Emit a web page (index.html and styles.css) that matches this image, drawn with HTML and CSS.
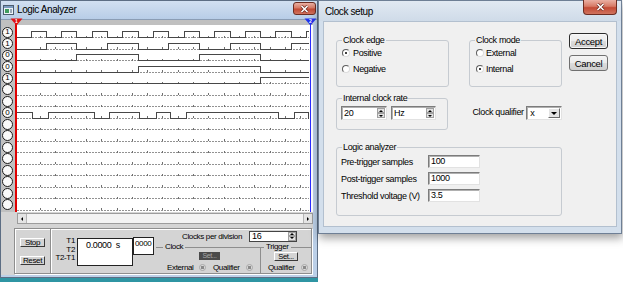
FILE: index.html
```html
<!DOCTYPE html>
<html>
<head>
<meta charset="utf-8">
<title>Logic Analyzer</title>
<link rel="stylesheet" href="styles.css">
</head>
<body>
<div class="la-col">
  <div class="la-win">
    <div class="la-title">
      <svg class="app-icon" width="11" height="10" viewBox="0 0 11 10">
        <rect x="0.5" y="0.5" width="10" height="9" fill="#eef3f8" stroke="#4d5d70"/>
        <rect x="1" y="1" width="9" height="2" fill="#7d9cc0"/>
        <rect x="2" y="4" width="4" height="4" fill="#3f9c5e"/>
        <rect x="7" y="4" width="2" height="4" fill="#9aa9b8"/>
      </svg>
      <span class="title-text">Logic Analyzer</span>
      <div class="close-btn la-close">
        <svg width="9" height="8" viewBox="0 0 9 8"><path d="M1.5 1 L7.5 7 M7.5 1 L1.5 7" stroke="#6b2a20" stroke-width="3"/><path d="M1.5 1 L7.5 7 M7.5 1 L1.5 7" stroke="#fff" stroke-width="1.6"/></svg>
      </div>
    </div>
    <div class="la-client">
      <div class="la-top">
        <div class="leds">
          <div class="led"><span>1</span></div>
          <div class="led"><span>1</span></div>
          <div class="led"><span>0</span></div>
          <div class="led"><span>0</span></div>
          <div class="led"><span>1</span></div>
          <div class="led"><span></span></div>
          <div class="led"><span></span></div>
          <div class="led"><span>0</span></div>
          <div class="led"><span></span></div>
          <div class="led"><span></span></div>
          <div class="led"><span></span></div>
          <div class="led"><span></span></div>
          <div class="led"><span></span></div>
          <div class="led"><span></span></div>
          <div class="led"><span></span></div>
          <div class="led"><span></span></div>
        </div>
        <svg class="scope" width="298" height="192" viewBox="0 0 298 192">
          <rect x="2" y="5" width="296" height="187" fill="#fff"/>
          <g class="grid">
            <line x1="2" x2="294" y1="17.5" y2="17.5"/>
            <line x1="2" x2="294" y1="29" y2="29"/>
            <line x1="2" x2="294" y1="40.5" y2="40.5"/>
            <line x1="2" x2="294" y1="52" y2="52"/>
            <line x1="2" x2="294" y1="63.5" y2="63.5"/>
            <line x1="2" x2="294" y1="75" y2="75"/>
            <line x1="2" x2="294" y1="86.5" y2="86.5"/>
            <line x1="2" x2="294" y1="98" y2="98"/>
            <line x1="2" x2="294" y1="109.5" y2="109.5"/>
            <line x1="2" x2="294" y1="121" y2="121"/>
            <line x1="2" x2="294" y1="132.5" y2="132.5"/>
            <line x1="2" x2="294" y1="144" y2="144"/>
            <line x1="2" x2="294" y1="155.5" y2="155.5"/>
            <line x1="2" x2="294" y1="167" y2="167"/>
            <line x1="2" x2="294" y1="178.5" y2="178.5"/>
            <line x1="2" x2="294" y1="190" y2="190"/>
          </g>
          <g class="ticks">
            <line x1="25" x2="294" y1="16.5" y2="16.5"/>
            <line x1="25" x2="294" y1="28" y2="28"/>
            <line x1="25" x2="294" y1="39.5" y2="39.5"/>
            <line x1="25" x2="294" y1="51" y2="51"/>
            <line x1="25" x2="294" y1="62.5" y2="62.5"/>
            <line x1="25" x2="294" y1="74" y2="74"/>
            <line x1="25" x2="294" y1="85.5" y2="85.5"/>
            <line x1="25" x2="294" y1="97" y2="97"/>
            <line x1="25" x2="294" y1="108.5" y2="108.5"/>
            <line x1="25" x2="294" y1="120" y2="120"/>
            <line x1="25" x2="294" y1="131.5" y2="131.5"/>
            <line x1="25" x2="294" y1="143" y2="143"/>
            <line x1="25" x2="294" y1="154.5" y2="154.5"/>
            <line x1="25" x2="294" y1="166" y2="166"/>
            <line x1="25" x2="294" y1="177.5" y2="177.5"/>
            <line x1="25" x2="294" y1="189" y2="189"/>
          </g>
          <polyline class="sig" points="2,17.5 16.5,17.5 16.5,11.5 31.5,11.5 31.5,17.5 46.5,17.5 46.5,11.5 61.5,11.5 61.5,17.5 77.5,17.5 77.5,11.5 92.5,11.5 92.5,17.5 107.5,17.5 107.5,11.5 123.5,11.5 123.5,17.5 138.5,17.5 138.5,11.5 153.5,11.5 153.5,17.5 169.5,17.5 169.5,11.5 184.5,11.5 184.5,17.5 199.5,17.5 199.5,11.5 215.5,11.5 215.5,17.5 230.5,17.5 230.5,11.5 245.5,11.5 245.5,17.5 260.5,17.5 260.5,11.5 276.5,11.5 276.5,17.5 291.5,17.5 291.5,11.5 294,11.5"/>
          <polyline class="sig" points="2,29 31.5,29 31.5,23 61.5,23 61.5,29 92.5,29 92.5,23 123.5,23 123.5,29 153.5,29 153.5,23 184.5,23 184.5,29 215.5,29 215.5,23 245.5,23 245.5,29 276.5,29 276.5,23 294,23"/>
          <polyline class="sig" points="2,40.5 61.5,40.5 61.5,34.5 123.5,34.5 123.5,40.5 184.5,40.5 184.5,34.5 245.5,34.5 245.5,40.5 294,40.5"/>
          <polyline class="sig" points="2,52 123.5,52 123.5,46 245.5,46 245.5,52 294,52"/>
          <polyline class="sig" points="2,63.5 245.5,63.5 245.5,57.5 294,57.5"/>
          <polyline class="sig" points="2,92 17.5,92 17.5,98 33.5,98 33.5,92 79.5,92 79.5,98 94.5,98 94.5,92 124.5,92 124.5,98 141.5,98 141.5,92 155.5,92 155.5,98 171.5,98 171.5,92 263.5,92 263.5,98 279.5,98 279.5,92 293.5,92 293.5,98 294,98"/>
          <rect x="0" y="0" width="2" height="192" fill="#e00000"/>
          <rect x="295" y="5" width="1" height="187" fill="#2a2aff"/>
          <polygon points="-4.5,-1.5 7.5,-1.5 1.5,5.5" fill="#e01010"/>
          <text class="mk" x="1.5" y="3.2">1</text>
          <polygon points="289.5,-1.5 301.5,-1.5 295.5,5.5" fill="#2233ee"/>
          <text class="mk" x="295.5" y="3.2">2</text>
        </svg>
      </div>
      <div class="hscroll">
        <div class="sb-btn sb-left"><i class="tri-l"></i></div>
        <div class="sb-btn sb-right"><i class="tri-r"></i></div>
      </div>
      <div class="panel">
        <div class="pb">
          <div class="cbtn">Stop</div>
          <div class="cbtn">Reset</div>
        </div>
        <div class="times">
          <div class="tlabels"><span>T1</span><span>T2</span><span>T2-T1</span></div>
          <div class="tbox">0.0000&nbsp;&nbsp;s</div>
          <div class="tbox2">0000</div>
        </div>
        <div class="clocks">
          <div class="cpd">
            <span class="cpd-label">Clocks per division</span>
            <div class="cpd-in"><span>16</span><i class="spin-s"><b><i class="tu"></i></b><b><i class="td"></i></b></i></div>
          </div>
          <div class="frames">
            <fieldset class="fr fr-clock">
              <legend>Clock</legend>
              <div class="set-dis">Set...</div>
              <div class="frow"><span class="fl-ext">External</span><i class="ledo"></i><span class="fl-q">Qualifier</span><i class="ledo"></i></div>
            </fieldset>
            <fieldset class="fr fr-trig">
              <legend>Trigger</legend>
              <div class="cbtn set-btn">Set...</div>
              <div class="frow frow-t"><span class="fl-q2">Qualifier</span><i class="ledo"></i></div>
            </fieldset>
          </div>
        </div>
      </div>
    </div>
  </div>
  <div class="teal"></div>
</div>

<div class="dlg">
  <div class="dlg-title">
    <span class="dlg-title-text">Clock setup</span>
    <div class="close-btn dlg-close">
      <svg width="9" height="8" viewBox="0 0 9 8"><path d="M1.5 1 L7.5 7 M7.5 1 L1.5 7" stroke="#6b2a20" stroke-width="3"/><path d="M1.5 1 L7.5 7 M7.5 1 L1.5 7" stroke="#fff" stroke-width="1.6"/></svg>
    </div>
  </div>
  <div class="dlg-client">
    <div class="dlg-main">
      <div class="drow1">
        <fieldset class="grp g-edge">
          <legend>Clock edge</legend>
          <div class="radio"><i class="rb on"></i><span>Positive</span></div>
          <div class="radio"><i class="rb"></i><span>Negative</span></div>
        </fieldset>
        <fieldset class="grp g-mode">
          <legend>Clock mode</legend>
          <div class="radio"><i class="rb"></i><span>External</span></div>
          <div class="radio"><i class="rb on"></i><span>Internal</span></div>
        </fieldset>
      </div>
      <div class="drow2">
        <fieldset class="grp g-rate">
          <legend>Internal clock rate</legend>
          <div class="rate-row">
            <div class="spinbox w46"><span>20</span><i class="sp"><b><i class="tu"></i></b><b><i class="td"></i></b></i></div>
            <div class="spinbox w45"><span>Hz</span><i class="sp"><b><i class="tu"></i></b><b><i class="td"></i></b></i></div>
          </div>
        </fieldset>
        <span class="cq">Clock qualifier</span>
        <div class="combo"><span>x</span><i class="dd"><i class="td2"></i></i></div>
      </div>
      <fieldset class="grp g-logic">
        <legend>Logic analyzer</legend>
        <div class="lgrid">
          <span>Pre-trigger samples</span><div class="tb">100</div>
          <span>Post-trigger samples</span><div class="tb">1000</div>
          <span>Threshold voltage (V)</span><div class="tb">3.5</div>
        </div>
      </fieldset>
    </div>
    <div class="dlg-btns">
      <div class="wbtn def">Accept</div>
      <div class="wbtn">Cancel</div>
    </div>
  </div>
</div>
</body>
</html>
```

FILE: styles.css
```css
* { box-sizing: border-box; }

body {
  margin: 0;
  width: 623px;
  height: 282px;
  overflow: hidden;
  background: #fff;
  display: flex;
  align-items: flex-start;
  font-family: "Liberation Sans", Arial, sans-serif;
  color: #000;
}

/* ---------- Logic analyzer window ---------- */
.la-col { width: 318px; display: flex; flex-direction: column; }

.la-win {
  height: 278px;
  border: 1px solid #5d6e84;
  background: #bcd0e8;
  padding: 0 4px 2px 0;
  display: flex;
  flex-direction: column;
}

.la-title {
  height: 19px;
  margin-right: -4px;
  display: flex;
  align-items: center;
  background: linear-gradient(#d2e0f1, #b8cde7);
  border-bottom: 1px solid #8b9db4;
}
.app-icon { margin-left: 2px; flex: none; }
.title-text { margin-left: 3px; font-size: 10px; letter-spacing: -0.4px; line-height: 12px; }

.close-btn {
  margin-left: auto;
  display: flex;
  align-items: center;
  justify-content: center;
  background: linear-gradient(#eab0a3, #d77a66 45%, #c34a35 55%, #d0735e);
  border: 1px solid #6d2d22;
  border-top: none;
  border-radius: 0 0 4px 4px;
}
.la-close { width: 23px; height: 13px; margin-right: 1px; align-self: flex-start; margin-top: 1px; border-top: 1px solid #6d2d22; border-radius: 3px; }

.la-client {
  flex: 1;
  background: #d4d4d4;
  display: flex;
  flex-direction: column;
}

.la-top { display: flex; height: 192px; background: #c0c0c0; }

.leds { width: 14px; padding: 6.75px 0 0 1px; flex: none; }
.led { height: 11.5px; }
.led span {
  display: flex;
  align-items: center;
  justify-content: center;
  width: 11px;
  height: 11px;
  border: 1px solid #1c1c1c;
  border-radius: 50%;
  background: #fafafa;
  font-size: 8px;
  line-height: 1;
}

.scope { display: block; overflow: visible; flex: none; }
.grid line { stroke: #929292; stroke-width: 1; stroke-dasharray: 2 1; shape-rendering: crispEdges; }
.ticks line { stroke: #707070; stroke-width: 2; stroke-dasharray: 1 14.3; shape-rendering: crispEdges; }
.sig { fill: none; stroke: #474747; stroke-width: 1; shape-rendering: crispEdges; }
.mk { font-family: "Liberation Sans", Arial, sans-serif; font-size: 5px; font-weight: bold; fill: #fff; text-anchor: middle; }

.hscroll {
  margin: 1px 0 0 16px;
  width: 296px;
  height: 11px;
  border: 1px solid #9c9c9c;
  background: #f3f3f3;
  display: flex;
  justify-content: space-between;
}
.sb-btn {
  width: 9px;
  height: 9px;
  background: #e4e4e4;
  display: flex;
  align-items: center;
  justify-content: center;
}
.sb-left { border-right: 1px solid #b5b5b5; }
.sb-right { border-left: 1px solid #b5b5b5; }
.tri-l { display: block; border-style: solid; border-width: 2px 2px 2px 0; border-color: transparent #000 transparent transparent; }
.tri-r { display: block; border-style: solid; border-width: 2px 0 2px 2px; border-color: transparent transparent transparent #000; }

.panel {
  margin: 4px 0 0 13px;
  width: 298px;
  height: 46px;
  border: 1px solid #8e8e8e;
  box-shadow: inset 1px 1px 0 #fff, 1px 1px 0 #fff;
  display: flex;
  font-size: 8px;
  letter-spacing: -0.35px;
}

.pb { width: 35px; padding: 9px 0 0 5px; display: flex; flex-direction: column; gap: 9px; flex: none; }

.cbtn {
  width: 25px;
  height: 9px;
  font-size: 8px;
  line-height: 7px;
  display: flex;
  align-items: center;
  justify-content: center;
  background: #d4d4d4;
  border: 1px solid;
  border-color: #fff #3a3a3a #3a3a3a #fff;
}

.times {
  width: 106px;
  flex: none;
  border-left: 1px solid #8e8e8e;
  box-shadow: inset 1px 0 0 #fff;
  display: flex;
  align-items: flex-start;
}
.tlabels {
  width: 23px;
  margin-left: 1px;
  padding-top: 8px;
  display: flex;
  flex-direction: column;
  align-items: flex-end;
  font-size: 8px;
  line-height: 8.5px;
}
.tbox {
  margin: 9px 0 0 2px;
  width: 56px;
  height: 28px;
  background: #fff;
  border: 1px solid #222;
  font-size: 9px;
  line-height: 10px;
  padding: 1px 0 0 8px;
  white-space: nowrap;
}
.tbox2 {
  margin-top: 8px;
  width: 21px;
  height: 18px;
  background: #fff;
  border: 1px solid #222;
  font-size: 8px;
  line-height: 9px;
  padding: 1px 0 0 1px;
}

.clocks { width: 155px; flex: none; display: flex; flex-direction: column; }
.cpd { height: 14px; display: flex; align-items: center; }
.cpd-label { margin-left: 26px; width: 67px; white-space: nowrap; }
.cpd-in {
  width: 48px;
  height: 11px;
  background: #fff;
  border: 1px solid #444;
  display: flex;
  justify-content: space-between;
  align-items: stretch;
  font-size: 9px;
  line-height: 9px;
  padding-left: 2px;
}
.spin-s, .sp { display: flex; flex-direction: column; width: 8px; }
.spin-s b, .sp b {
  flex: 1;
  display: flex;
  align-items: center;
  justify-content: center;
  background: #e2e2e2;
  border: 1px solid #a0a0a0;
}
.tu { display: block; border-style: solid; border-width: 0 2px 2px 2px; border-color: transparent transparent #000 transparent; }
.td { display: block; border-style: solid; border-width: 2px 2px 0 2px; border-color: #000 transparent transparent transparent; }

.frames { display: flex; height: 30px; }
.fr {
  margin: 0;
  padding: 0;
  border: none;
  border-top: 1px solid #8e8e8e;
  min-width: 0;
  height: 30px;
}
.fr legend { font-size: 8px; line-height: 8px; padding: 0 2px; }
.fr-clock { width: 104px; }
.fr-clock legend { margin-left: 7px; }
.fr-trig { width: 51px; border-left: 1px solid #8e8e8e; }
.fr-trig legend { margin-left: 3px; }

.set-dis {
  margin: 1px 0 0 43px;
  width: 21px;
  height: 8px;
  background: #4a4a4a;
  color: #a6a6a6;
  font-size: 7px;
  line-height: 8px;
  text-align: center;
}
.set-btn { margin: 1px 0 0 13px; width: 24px; height: 9px; font-size: 7.5px; }

.frow { display: flex; align-items: center; height: 12px; margin-top: 1px; white-space: nowrap; }
.frow-t { margin-top: 0; }
.fl-ext { margin-left: 11px; width: 32px; }
.fl-q { margin-left: 7px; width: 33px; }
.fl-q2 { margin-left: 7px; width: 33px; }
.ledo {
  display: block;
  width: 7px;
  height: 7px;
  border-radius: 50%;
  border: 1px solid #a8a8a8;
  background: radial-gradient(circle, #8a8a8a 0 1.4px, #dadada 2px);
}

.teal { height: 4px; background: #2f95a3; }

/* ---------- Clock setup dialog ---------- */
.dlg {
  width: 304px;
  height: 234px;
  border: 1px solid #6e7f95;
  background: #d3dfec;
  padding: 0 4px 6px 4px;
  display: flex;
  flex-direction: column;
  box-shadow: 1px 4px 9px rgba(0, 0, 0, 0.38);
  font-size: 9px;
  letter-spacing: -0.35px;
}
.dlg-title {
  height: 20px;
  margin: 0 -4px;
  background: linear-gradient(#e1e9f2, #cfdbe8);
  display: flex;
  align-items: flex-start;
  flex: none;
}
.dlg-title-text { padding-left: 6px; font-size: 10px; letter-spacing: -0.4px; line-height: 21px; }
.dlg-close { width: 34px; height: 15px; margin-right: 4px; margin-top: -1px; }

.dlg-client {
  flex: 1;
  background: #f0f0f0;
  border: 1px solid #b3c0cf;
  padding: 11px 0 0 12px;
  display: flex;
  align-items: flex-start;
}
.dlg-main { width: 226px; display: flex; flex-direction: column; flex: none; }

.drow1 { display: flex; gap: 20px; margin-top: 2px; }

.grp {
  margin: 0;
  padding: 0;
  border: 1px solid #c6cbd1;
  border-radius: 3px;
  min-width: 0;
}
.grp legend { margin-left: 5px; padding: 0 1px; font-size: 9px; line-height: 10px; }
.g-edge { width: 113px; height: 52px; }
.g-mode { width: 93px; height: 52px; }

.radio { display: flex; align-items: center; gap: 3px; height: 16px; margin-left: 5px; }
.g-mode .radio { margin-left: 6px; gap: 2px; }
.rb {
  display: flex;
  align-items: center;
  justify-content: center;
  width: 8px;
  height: 8px;
  border-radius: 50%;
  background: #fff;
  border: 1px solid;
  border-color: #5e5e5e #dcdcdc #dcdcdc #5e5e5e;
}
.rb.on::after { content: ""; width: 2px; height: 2px; border-radius: 50%; background: #000; }

.drow2 { display: flex; align-items: flex-start; margin-top: 6px; }
.g-rate { width: 113px; height: 37px; }
.rate-row { display: flex; gap: 4px; margin: 3px 0 0 4px; }
.spinbox, .combo, .tb {
  background: #fff;
  border: 1px solid;
  border-color: #7c7c7c #e2e2e2 #e2e2e2 #7c7c7c;
  box-shadow: inset 1px 1px 0 #b0b0b0;
}
.spinbox {
  height: 14px;
  display: flex;
  justify-content: space-between;
  line-height: 12px;
  padding: 0 0 0 2px;
}
.spinbox .sp { margin: 1px; width: 8px; }
.w46 { width: 46px; }
.w45 { width: 45px; }

.cq { margin: 14px 0 0 24px; width: 54px; line-height: 10px; white-space: nowrap; }
.combo {
  margin-top: 13px;
  width: 36px;
  height: 14px;
  display: flex;
  justify-content: space-between;
  line-height: 12px;
  padding-left: 3px;
}
.dd {
  display: flex;
  align-items: center;
  justify-content: center;
  width: 12px;
  margin: 1px;
  background: #e4e4e4;
  border: 1px solid;
  border-color: #fff #6a6a6a #6a6a6a #fff;
}
.td2 { display: block; border-style: solid; border-width: 3px 3px 0 3px; border-color: #000 transparent transparent transparent; }

.g-logic { margin-top: 12px; width: 226px; height: 74px; }
.lgrid {
  display: grid;
  grid-template-columns: 87px 52px;
  grid-auto-rows: 13px;
  row-gap: 4.2px;
  align-items: center;
  margin: 3px 0 0 4px;
  white-space: nowrap;
}
.tb { height: 13px; padding-left: 2px; line-height: 11px; }

.dlg-btns { margin-left: 7px; display: flex; flex-direction: column; gap: 6px; flex: none; }
.wbtn {
  width: 39px;
  height: 16px;
  border: 1px solid #707070;
  border-radius: 3px;
  background: linear-gradient(#f4f4f4 0, #ebebeb 50%, #dddddd 50%, #cfcfcf 100%);
  font-size: 9.5px;
  display: flex;
  align-items: center;
  justify-content: center;
}
.wbtn.def { border-color: #2c2c2c; box-shadow: inset 0 0 0 1px #f8f8f8; }
```
